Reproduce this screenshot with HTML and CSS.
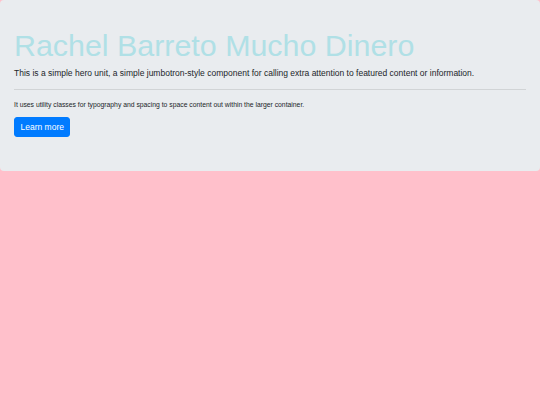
FILE: index.html
```html
<!DOCTYPE html>
<html lang="en">
<head>
<meta charset="utf-8">
<title>Jumbotron</title>
<link rel="stylesheet" href="styles.css">
</head>
<body>
<div class="jumbotron">
  <h1 class="display">Rachel Barreto Mucho Dinero</h1>
  <p class="lead">This is a simple hero unit, a simple jumbotron-style component for calling extra attention to featured content or information.</p>
  <hr class="divider">
  <p class="note">It uses utility classes for typography and spacing to space content out within the larger container.</p>
  <a class="btn" href="#" role="button">Learn more</a>
</div>
</body>
</html>
```
FILE: styles.css
```css
html, body {
  margin: 0;
  padding: 0;
}
body {
  background: #ffc0cb;
  font-family: "Liberation Sans", Arial, sans-serif;
  color: #212529;
  min-height: 405px;
}
.jumbotron {
  background: #e9ecef;
  padding: 27px 14px 34px;
  border-radius: 4px;
}
.display {
  margin: 0 0 4px;
  font-size: 30.4px;
  font-weight: 300;
  line-height: 36px;
  color: #b0e0e6;
}
.lead {
  margin: 0;
  font-size: 8.5px;
  line-height: 13px;
}
.divider {
  margin: 9px 0 10px;
  border: 0;
  border-top: 1px solid rgba(0, 0, 0, 0.1);
  height: 0;
}
.note {
  margin: 0 0 6.5px;
  font-size: 6.8px;
  line-height: 10.2px;
}
.btn {
  display: block;
  width: fit-content;
  font-size: 8.5px;
  line-height: 12px;
  padding: 3px 5.5px;
  border: 1px solid #007bff;
  border-radius: 3px;
  background: #007bff;
  color: #fff;
  text-decoration: none;
}
```
